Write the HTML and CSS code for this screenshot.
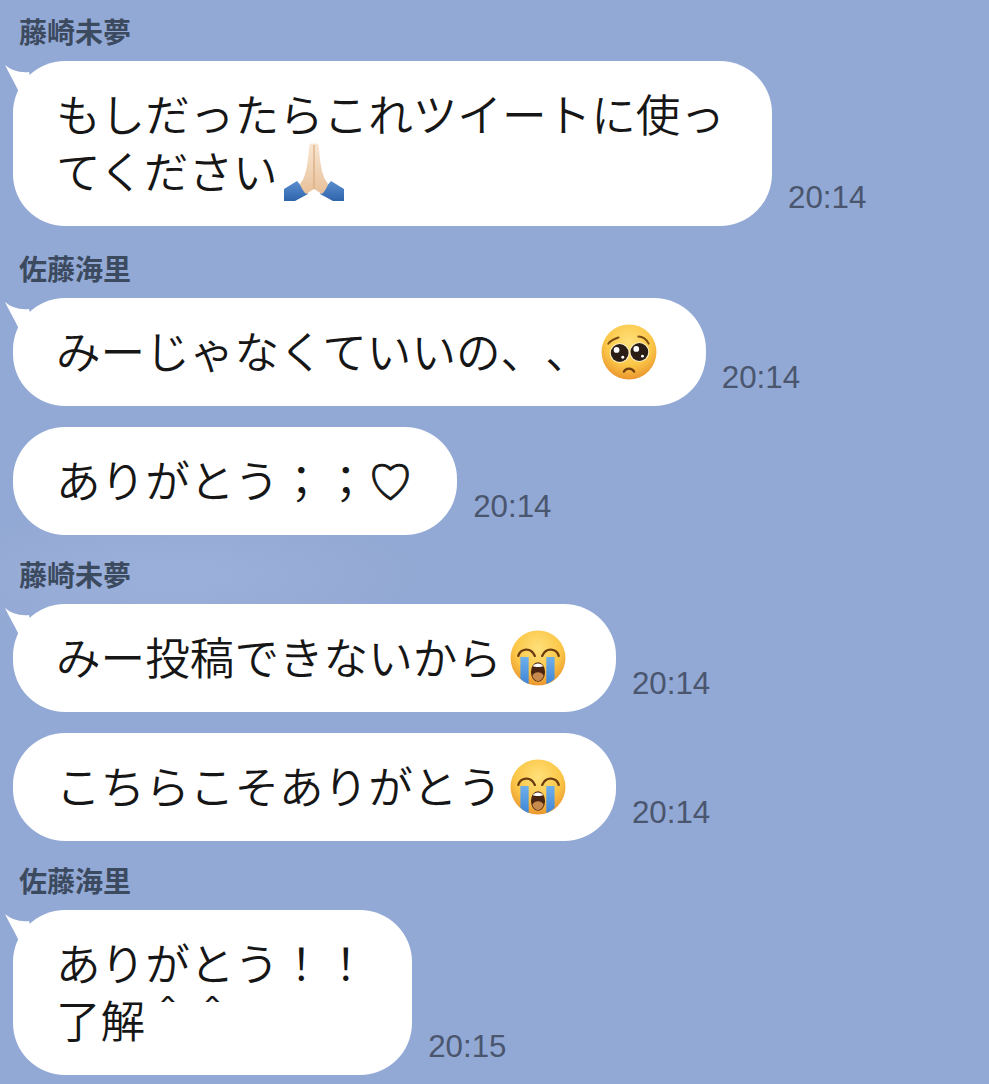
FILE: index.html
```html
<!DOCTYPE html>
<html lang="ja">
<head>
    <meta charset="UTF-8">
    <title>トーク</title>
    <link rel="stylesheet" href="styles.css">
</head>
<body>
    <svg class="defs" width="0" height="0">
        <defs>
            <radialGradient id="face" cx="50%" cy="32%" r="70%">
                <stop offset="0" stop-color="#ffe07a"/>
                <stop offset="0.6" stop-color="#fbc748"/>
                <stop offset="1" stop-color="#e9922c"/>
            </radialGradient>
            <linearGradient id="skin" x1="0" y1="0" x2="0" y2="1">
                <stop offset="0" stop-color="#f8e6d2"/>
                <stop offset="1" stop-color="#e8c09a"/>
            </linearGradient>
            <linearGradient id="sleeve" x1="0" y1="0" x2="0" y2="1">
                <stop offset="0" stop-color="#5c8fd0"/>
                <stop offset="1" stop-color="#2f64ac"/>
            </linearGradient>
            <linearGradient id="tear" x1="0" y1="0" x2="0" y2="1">
                <stop offset="0" stop-color="#6fb0ea"/>
                <stop offset="1" stop-color="#3f86d8"/>
            </linearGradient>
            <symbol id="pray" viewBox="0 0 60 60">
                <path d="M0 47 13 39 24 52 11 59H0Z" fill="url(#sleeve)"/>
                <path d="M60 47 47 39 36 52 49 59H60Z" fill="url(#sleeve)"/>
                <path d="M30 2C27 0 25 2 25 7 24 17 23 27 21 32 20 37 17 40 16 42 17 46 20 50 22 52 25 50 27 49 30 47 33 49 35 50 38 52 40 50 43 46 44 42 43 40 40 37 39 32 37 27 36 17 35 7 35 2 33 0 30 2Z" fill="url(#skin)"/>
                <path d="M30 3V47" stroke="#d9a97f" stroke-width="1.2" fill="none"/>
            </symbol>
            <symbol id="plead" viewBox="0 0 54 54">
                <circle cx="27" cy="27" r="26.5" fill="url(#face)"/>
                <path d="M7 19C10 15 14 14 17 13M36 12C40 12 44 15 46 19" stroke="#7a4a12" stroke-width="1.8" fill="none" stroke-linecap="round"/>
                <circle cx="18" cy="28" r="9.5" fill="#fff6d2"/>
                <circle cx="37" cy="27" r="9.5" fill="#fff6d2"/>
                <circle cx="18" cy="28" r="8.6" fill="#2a1d16"/>
                <circle cx="37" cy="27" r="8.6" fill="#2a1d16"/>
                <circle cx="15" cy="25" r="2.8" fill="#fff"/>
                <circle cx="34" cy="24" r="2.8" fill="#fff"/>
                <circle cx="21" cy="32" r="1.4" fill="#fff"/>
                <circle cx="40" cy="31" r="1.4" fill="#fff"/>
                <path d="M22 46C24 42 30 42 32 46" stroke="#6b3c10" stroke-width="2" fill="none" stroke-linecap="round"/>
            </symbol>
            <symbol id="cry" viewBox="0 0 54 54">
                <circle cx="27" cy="27" r="26.5" fill="url(#face)"/>
                <path d="M10 26H18V52C15 51 12 49 10 47Z" fill="url(#tear)"/>
                <path d="M35 26H43V47C41 49 38 51 35 52Z" fill="url(#tear)"/>
                <path d="M8 25C10 18 20 16 24 25M31 25C35 16 45 18 47 25" stroke="#6b3c10" stroke-width="2.2" fill="none" stroke-linecap="round"/>
                <ellipse cx="27" cy="40.5" rx="6.8" ry="9.5" fill="#4a2612"/>
                <path d="M22 35C24 31.5 30 31.5 32 35 30 36 24 36 22 35Z" fill="#fff"/>
                <path d="M21.5 44C24 39.5 30 39.5 32.5 44 30 51 24 51 21.5 44Z" fill="#c98a4e"/>
            </symbol>
        </defs>
    </svg>

    <main class="talk">
        <section class="group group-tall">
            <div class="name">藤崎未夢</div>
            <div class="msg">
                <div class="bubble bubble-wide">
                    <svg class="tail" viewBox="0 0 30 34"><path d="M0 0C6 5 14 8 24 7L30 34H16L13 25C9 17 4 8 0 0Z"/></svg>
                    もしだったらこれツイートに使っ<br>てください<svg class="emoji emoji-pray"><use href="#pray"/></svg>
                </div>
                <span class="time">20:14</span>
            </div>
        </section>

        <section class="group">
            <div class="name">佐藤海里</div>
            <div class="msg">
                <div class="bubble">
                    <svg class="tail" viewBox="0 0 30 34"><path d="M0 0C6 5 14 8 24 7L30 34H16L13 25C9 17 4 8 0 0Z"/></svg>
                    みーじゃなくていいの、、<svg class="emoji emoji-plead"><use href="#plead"/></svg>
                </div>
                <span class="time">20:14</span>
            </div>
            <div class="msg">
                <div class="bubble">ありがとう；；<span class="heart">♡</span></div>
                <span class="time">20:14</span>
            </div>
        </section>

        <section class="group">
            <div class="name">藤崎未夢</div>
            <div class="msg">
                <div class="bubble">
                    <svg class="tail" viewBox="0 0 30 34"><path d="M0 0C6 5 14 8 24 7L30 34H16L13 25C9 17 4 8 0 0Z"/></svg>
                    みー投稿できないから<svg class="emoji"><use href="#cry"/></svg>
                </div>
                <span class="time">20:14</span>
            </div>
            <div class="msg">
                <div class="bubble">こちらこそありがとう<svg class="emoji"><use href="#cry"/></svg></div>
                <span class="time">20:14</span>
            </div>
        </section>

        <section class="group">
            <div class="name">佐藤海里</div>
            <div class="msg">
                <div class="bubble">
                    <svg class="tail" viewBox="0 0 30 34"><path d="M0 0C6 5 14 8 24 7L30 34H16L13 25C9 17 4 8 0 0Z"/></svg>
                    ありがとう！！<br>了解＾＾
                </div>
                <span class="time">20:15</span>
            </div>
        </section>
    </main>
</body>
</html>
```

FILE: styles.css
```css
* {
    margin: 0;
    padding: 0;
    box-sizing: border-box;
}
html, body {
    height: 100%;
    overflow: hidden;
}
body {
    background: radial-gradient(ellipse 260px 70px at 170px 575px, #9bb0d9, #93a9d5);
    font-family: "Noto Sans CJK JP", "Liberation Sans", sans-serif;
}
.defs {
    display: block;
    height: 0;
}
.talk {
    display: flex;
    flex-direction: column;
    gap: 21px;
    padding: 13px 0 0 13px;
}
.group {
    display: flex;
    flex-direction: column;
    gap: 21px;
}
.group-tall {
    margin-bottom: 3px;
}
.name {
    height: 36px;
    margin-bottom: -9px;
    padding-left: 6px;
    font-size: 28px;
    font-weight: 700;
    line-height: 36px;
    color: #3c4a60;
}
.msg {
    display: flex;
    align-items: flex-end;
    gap: 16px;
}
.bubble {
    position: relative;
    padding: 23px 44px 28px 43px;
    border-radius: 52px;
    background: #fff;
    font-size: 44.6px;
    font-weight: 330;
    text-spacing-trim: space-all;
    line-height: 57px;
    color: #161616;
    white-space: nowrap;
}
.bubble-wide {
    width: 759px;
}
.tail {
    position: absolute;
    left: -8px;
    top: 4px;
    width: 30px;
    height: 34px;
    fill: #fff;
}
.emoji {
    width: 56px;
    height: 56px;
    margin: -20px 6px -20px 8px;
    vertical-align: 9px;
}
.emoji-plead {
    margin-left: 11px;
    margin-right: 5px;
}
.emoji-pray {
    width: 60px;
    height: 60px;
    margin-left: 6px;
    margin-right: 0;
    vertical-align: 7px;
}
.heart {
    font-family: "DejaVu Sans", sans-serif;
    line-height: 0;
    -webkit-text-stroke: 1px #161616;
}
.time {
    padding-bottom: 10px;
    font-family: "Liberation Sans", sans-serif;
    font-size: 31.3px;
    line-height: 36px;
    color: #4a566e;
}
```
